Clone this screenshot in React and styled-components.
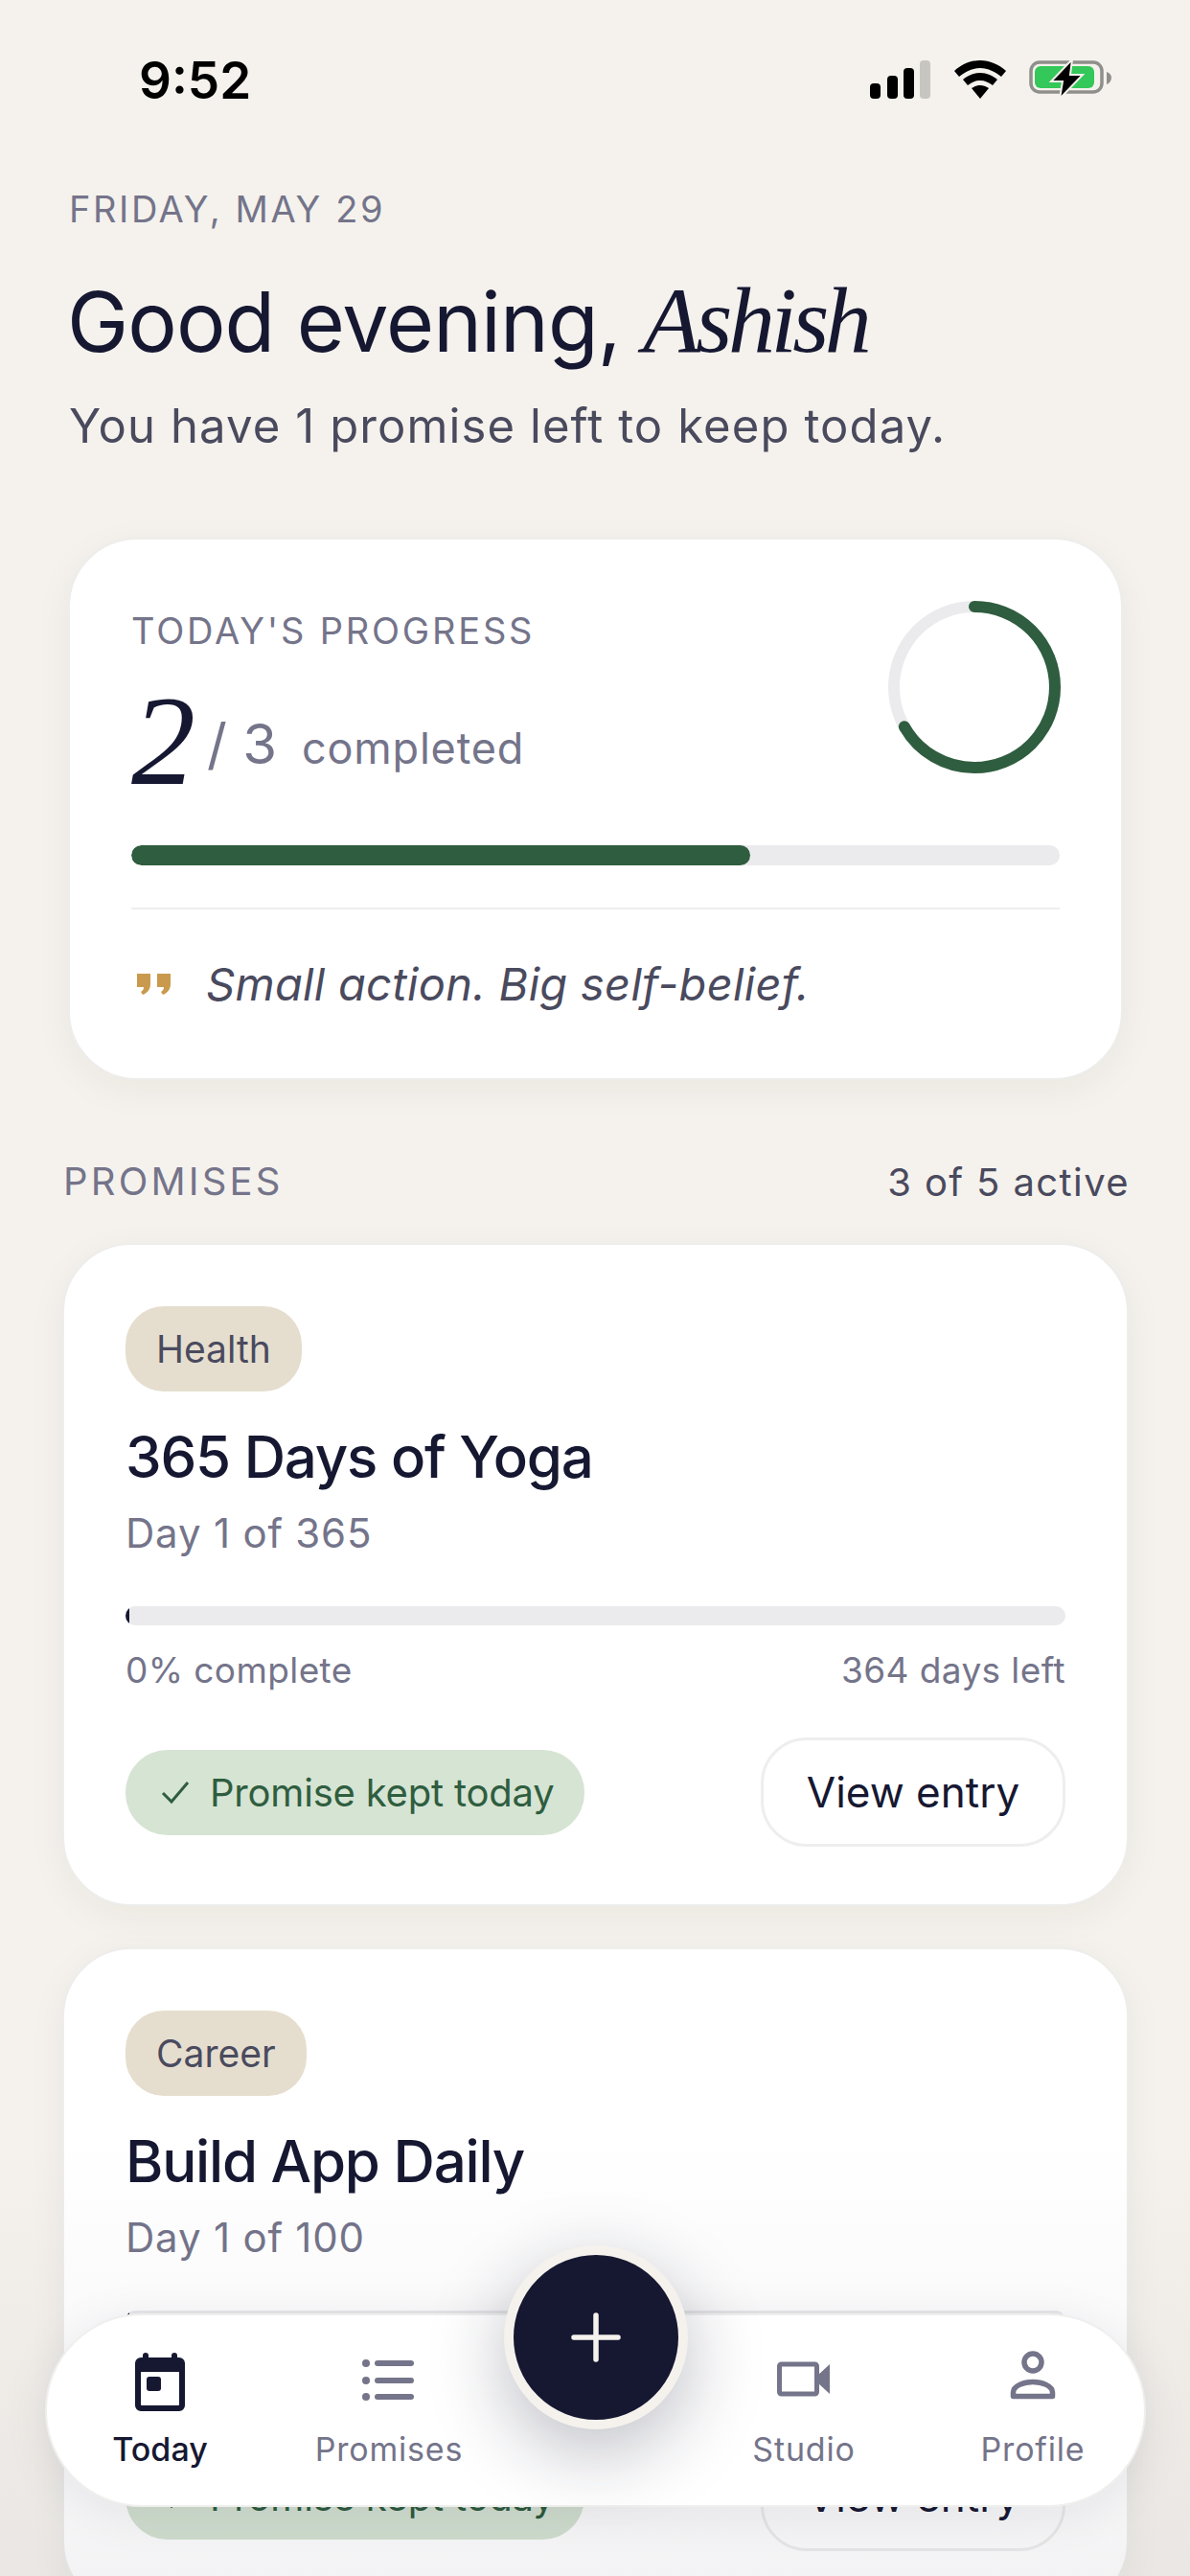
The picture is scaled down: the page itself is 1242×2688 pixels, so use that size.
import * as React from 'react';
import styled, { createGlobalStyle } from 'styled-components';

const ink = '#161832';
const slate = '#4a4a5e';
const muted = '#74748a';
const green = '#2f5d3f';
const cream = '#f5f2ed';
const track = '#ebebed';

const GlobalStyle = createGlobalStyle`
  html, body {
    margin: 0;
    padding: 0;
    background: ${cream};
  }
  * {
    box-sizing: border-box;
  }
`;

const Screen = styled.div`
  position: relative;
  width: 1242px;
  height: 2688px;
  overflow: hidden;
  background: ${cream};
  font-family: Inter, "Liberation Sans", sans-serif;
  color: ${ink};
`;

const StatusBar = styled.div`
  display: flex;
  justify-content: space-between;
  align-items: flex-start;
  height: 195px;
  padding: 54px 80px 0 145px;
`;

const Clock = styled.div`
  font-size: 53px;
  line-height: 60px;
  font-weight: 600;
  color: #000;
`;

const Header = styled.header`
  padding: 0 72px;
`;

const DateLine = styled.div`
  font-size: 38px;
  line-height: 46px;
  letter-spacing: 2.6px;
  color: ${muted};
`;

const Greeting = styled.h1`
  margin: 38px 0 0 -2px;
  font-size: 86px;
  line-height: 110px;
  font-weight: 400;
  letter-spacing: -0.9px;
  color: ${ink};
`;

const Name = styled.em`
  font-family: "Liberation Serif", serif;
  font-style: italic;
  font-size: 98px;
  letter-spacing: -4.5px;
`;

const Sub = styled.p`
  margin: 23px 0 0;
  font-size: 49px;
  line-height: 62px;
  letter-spacing: 1.1px;
  color: ${slate};
`;

const Card = styled.section`
  background: #fff;
  border: 2px solid #ededeb;
  border-radius: 72px;
  box-shadow: 0 10px 40px rgba(40, 36, 20, 0.05);
`;

const ProgressCard = styled(Card)`
  margin: 85px 70px 0 71px;
  height: 566px;
  padding: 56px 64px 0;
`;

const ProgressTop = styled.div`
  display: flex;
  justify-content: space-between;
  height: 201px;
  margin-bottom: 62px;
`;

const Caption = styled.div`
  font-size: 38px;
  line-height: 46px;
  letter-spacing: 2.8px;
  color: ${muted};
`;

const SectionLabel = styled(Caption)`
  font-size: 40px;
  letter-spacing: 3.2px;
`;

const ProgressLabel = styled(Caption)`
  margin-top: 16px;
`;

const Score = styled.div`
  display: flex;
  align-items: flex-end;
  height: 130px;
  margin-top: 27px;
`;

const ScoreDone = styled.span`
  font-family: "Liberation Serif", serif;
  font-style: italic;
  font-size: 134px;
  line-height: 130px;
  color: ${ink};
`;

const ScoreRest = styled.div`
  display: flex;
  align-items: baseline;
  padding-bottom: 27px;
`;

const ScoreTotal = styled.span`
  margin-left: 12px;
  font-size: 58px;
  color: ${muted};
`;

const ScoreWord = styled.span`
  margin-left: 26px;
  font-size: 45px;
  letter-spacing: 0.8px;
  color: ${muted};
`;

const Ring = styled.svg`
  display: block;
  width: 180px;
  height: 180px;
  margin: 8px -1px 0 0;
`;

const Bar = styled.div`
  height: ${(p) => p.$height}px;
  border-radius: 12px;
  background: ${track};
  overflow: hidden;
`;

const BarFill = styled.div`
  height: 100%;
  border-radius: 12px;
  background: ${(p) => p.$color};
`;

const Divider = styled.div`
  height: 2px;
  margin-top: 44px;
  background: #eeeeee;
`;

const Quote = styled.div`
  display: flex;
  align-items: center;
  gap: 36px;
  height: 155px;
  padding-left: 6px;
  font-size: 47px;
  font-style: italic;
  letter-spacing: 0.3px;
  color: ${slate};
`;

const SectionHead = styled.div`
  display: flex;
  justify-content: space-between;
  align-items: center;
  height: 46px;
  margin: 83px 63px 0 66px;
`;

const SectionCount = styled.span`
  font-size: 40px;
  letter-spacing: 1.4px;
  color: ${slate};
`;

const PromiseList = styled.div`
  display: flex;
  flex-direction: column;
  gap: 43px;
  margin: 41px 64px 0 65px;
`;

const PromiseCard = styled(Card)`
  height: 692px;
  padding: 64px 64px 0;
`;

const Tag = styled.span`
  display: inline-flex;
  align-items: center;
  height: 89px;
  padding: 0 32px;
  border-radius: 40px;
  background: #e5decf;
  font-size: 39px;
  color: ${slate};
`;

const PromiseTitle = styled.h2`
  margin: 32px 0 0;
  font-size: 60px;
  line-height: 72px;
  font-weight: 500;
  letter-spacing: -1.2px;
  color: ${ink};
`;

const DayCount = styled.div`
  margin-top: 19px;
  font-size: 42px;
  line-height: 50px;
  letter-spacing: 0.8px;
  color: ${muted};
`;

const PromiseBar = styled(Bar)`
  margin-top: 51px;
`;

const BarNotes = styled.div`
  display: flex;
  justify-content: space-between;
  margin-top: 24px;
  font-size: 37px;
  line-height: 46px;
  letter-spacing: 0.4px;
  color: ${muted};
`;

const ActionRow = styled.div`
  display: flex;
  justify-content: space-between;
  align-items: center;
  margin-top: 47px;
`;

const KeptPill = styled.div`
  display: flex;
  align-items: center;
  gap: 20px;
  width: 479px;
  height: 89px;
  padding: 0 0 0 36px;
  border-radius: 44px;
  background: #d6e4d3;
  font-size: 40px;
  letter-spacing: -0.2px;
  color: ${green};
`;

const EntryButton = styled.button`
  width: 318px;
  height: 114px;
  padding: 0;
  border: 3px solid #eeeeee;
  border-radius: 48px;
  background: #fff;
  font-family: inherit;
  font-size: 44px;
  color: ${ink};
`;

const Scrim = styled.div`
  position: absolute;
  left: 0;
  right: 0;
  bottom: 0;
  height: 460px;
  background: linear-gradient(rgba(22, 24, 50, 0), rgba(22, 24, 50, 0.05));
`;

const TabBar = styled.nav`
  position: absolute;
  left: 47px;
  top: 2414px;
  width: 1149px;
  height: 202px;
  display: grid;
  grid-template-columns: 200px 200px 1fr 200px 200px;
  column-gap: 39px;
  padding: 0 16px 0 18px;
  border: 2px solid #efefed;
  border-radius: 101px;
  background: #fff;
  box-shadow: 0 8px 50px rgba(22, 24, 50, 0.08);
`;

const Tab = styled.div`
  display: flex;
  flex-direction: column;
  align-items: center;
  padding-top: 36px;
  color: ${(p) => (p.$active ? ink : muted)};
`;

const TabIcon = styled.svg`
  display: block;
  width: 64px;
  height: 64px;
`;

const TabLabel = styled.span`
  margin-top: 19px;
  font-size: 34px;
  line-height: 42px;
  font-weight: ${(p) => (p.$active ? 500 : 400)};
  letter-spacing: ${(p) => (p.$active ? 0 : 0.8)}px;
`;

const Fab = styled.button`
  position: absolute;
  left: 526px;
  top: 2343px;
  width: 192px;
  height: 192px;
  display: flex;
  align-items: center;
  justify-content: center;
  padding: 0;
  border: 10px solid ${cream};
  border-radius: 50%;
  background: ${ink};
  box-shadow: 0 24px 80px rgba(22, 24, 50, 0.28);
`;

const SignalIcon = () => (
  <svg width="64" height="40" viewBox="0 0 64 40">
    <rect x="0" y="24" width="11" height="16" rx="4" fill="#000" />
    <rect x="18" y="16" width="11" height="24" rx="4" fill="#000" />
    <rect x="35" y="8" width="11" height="32" rx="4" fill="#000" />
    <rect x="52" y="0" width="11" height="40" rx="4" fill="#c6c5c0" />
  </svg>
);

const WifiIcon = () => (
  <svg width="54" height="40" viewBox="0 0 54 40">
    <path d="M27 0C17 0 8 4 0 11l5 6c6-5 14-9 22-9s16 4 22 9l5-6C46 4 37 0 27 0z" fill="#000" />
    <path d="M27 13c-7 0-13 3-18 7l5 6c4-3 8-5 13-5s9 2 13 5l5-6c-5-4-11-7-18-7z" fill="#000" />
    <path d="M27 26c-3 0-6 1-9 3l9 11 9-11c-3-2-6-3-9-3z" fill="#000" />
  </svg>
);

const BatterySvg = styled.svg`
  margin-top: -2px;
`;

const BatteryIcon = () => (
  <BatterySvg width="88" height="44" viewBox="0 0 88 44">
    <rect x="2" y="4" width="74" height="31" rx="9" fill="none" stroke="#8f8f8c" strokeWidth="3.5" />
    <rect x="6" y="8" width="62" height="23" rx="6" fill="#34c759" />
    <path d="M81 14c3 1 5 3 5 6s-2 6-5 7z" fill="#8f8f8c" />
    <path d="M45 1L23 24h12l-3 18 24-25H43z" fill="#000" stroke={cream} strokeWidth="2" />
  </BatterySvg>
);

const StatusIcons = styled.div`
  display: flex;
  align-items: flex-start;
  gap: 24px;
  padding-top: 9px;
`;

const QuoteMark = () => (
  <svg width="36" height="22" viewBox="0 0 36 22">
    <path d="M0 0h14v11c0 5-3 9-8 11l-2-3c2-1 3-3 3-5H0zM21 0h14v11c0 5-3 9-8 11l-2-3c2-1 3-3 3-5h-7z" fill="#c99a4e" />
  </svg>
);

const CheckIcon = () => (
  <svg width="32" height="30" viewBox="0 0 32 30">
    <path d="M3 16l9 9L29 5" fill="none" stroke={green} strokeWidth="3" />
  </svg>
);

const CalendarIcon = () => (
  <TabIcon viewBox="0 0 64 64">
    <path
      d="M17 3a3 3 0 0 1 3 3v2h24V6a3 3 0 0 1 6 0v2h2a6 6 0 0 1 6 6v44a6 6 0 0 1-6 6H12a6 6 0 0 1-6-6V14a6 6 0 0 1 6-6h2V6a3 3 0 0 1 3-3zM12 23v34a1 1 0 0 0 1 1h38a1 1 0 0 0 1-1V23z"
      fill="currentColor"
      fillRule="evenodd"
    />
    <rect x="18" y="28" width="15" height="15" rx="3" fill="currentColor" />
  </TabIcon>
);

const ListIcon = () => (
  <TabIcon viewBox="0 0 64 64">
    <circle cx="8" cy="14" r="4" fill="currentColor" />
    <circle cx="8" cy="32" r="4" fill="currentColor" />
    <circle cx="8" cy="49" r="4" fill="currentColor" />
    <rect x="17" y="11" width="41" height="6" rx="3" fill="currentColor" />
    <rect x="17" y="29" width="41" height="6" rx="3" fill="currentColor" />
    <rect x="17" y="46" width="41" height="6" rx="3" fill="currentColor" />
  </TabIcon>
);

const VideoIcon = () => (
  <TabIcon viewBox="0 0 64 64">
    <rect x="6.5" y="15" width="39" height="31" rx="2" fill="none" stroke="currentColor" strokeWidth="5" />
    <path d="M46 27l13-12v31L46 34z" fill="currentColor" />
  </TabIcon>
);

const PersonIcon = () => (
  <TabIcon viewBox="0 0 64 64">
    <circle cx="32" cy="13" r="9" fill="none" stroke="currentColor" strokeWidth="5.5" />
    <path
      d="M11.5 48.5v-4c0-7 11-11 20.500-11s20.500 4 20.500 11v4z"
      fill="none"
      stroke="currentColor"
      strokeWidth="5.5"
      strokeLinejoin="round"
    />
  </TabIcon>
);

const promises = [
  { tag: 'Health', title: '365 Days of Yoga', days: 'Day 1 of 365', left: '364 days left' },
  { tag: 'Career', title: 'Build App Daily', days: 'Day 1 of 100', left: '99 days left' },
];

const tabs = [
  { label: 'Today', Icon: CalendarIcon, active: true },
  { label: 'Promises', Icon: ListIcon },
  null,
  { label: 'Studio', Icon: VideoIcon },
  { label: 'Profile', Icon: PersonIcon },
];

const ringLength = 2 * Math.PI * 84;

export default function App() {
  return (
    <Screen>
      <GlobalStyle />
      <StatusBar>
        <Clock>9:52</Clock>
        <StatusIcons>
          <SignalIcon />
          <WifiIcon />
          <BatteryIcon />
        </StatusIcons>
      </StatusBar>

      <Header>
        <DateLine>FRIDAY, MAY 29</DateLine>
        <Greeting>
          Good evening, <Name>Ashish</Name>
        </Greeting>
        <Sub>You have 1 promise left to keep today.</Sub>
      </Header>

      <ProgressCard>
        <ProgressTop>
          <div>
            <ProgressLabel>TODAY'S PROGRESS</ProgressLabel>
            <Score>
              <ScoreDone>2</ScoreDone>
              <ScoreRest>
                <ScoreTotal>/ 3</ScoreTotal>
                <ScoreWord>completed</ScoreWord>
              </ScoreRest>
            </Score>
          </div>
          <Ring viewBox="0 0 180 180">
            <circle cx="90" cy="90" r="84" fill="none" stroke={track} strokeWidth="12" />
            <circle
              cx="90"
              cy="90"
              r="84"
              fill="none"
              stroke={green}
              strokeWidth="12"
              strokeLinecap="round"
              strokeDasharray={`${ringLength * 0.667} ${ringLength}`}
              transform="rotate(-90 90 90)"
            />
          </Ring>
        </ProgressTop>
        <Bar $height={21}>
          <BarFill $color={green} style={{ width: '66.7%' }} />
        </Bar>
        <Divider />
        <Quote>
          <QuoteMark />
          Small action. Big self-belief.
        </Quote>
      </ProgressCard>

      <SectionHead>
        <SectionLabel>PROMISES</SectionLabel>
        <SectionCount>3 of 5 active</SectionCount>
      </SectionHead>

      <PromiseList>
        {promises.map((item) => (
          <PromiseCard key={item.title}>
            <Tag>{item.tag}</Tag>
            <PromiseTitle>{item.title}</PromiseTitle>
            <DayCount>{item.days}</DayCount>
            <PromiseBar $height={20}>
              <BarFill $color={ink} style={{ width: '4px' }} />
            </PromiseBar>
            <BarNotes>
              <span>0% complete</span>
              <span>{item.left}</span>
            </BarNotes>
            <ActionRow>
              <KeptPill>
                <CheckIcon />
                Promise kept today
              </KeptPill>
              <EntryButton>View entry</EntryButton>
            </ActionRow>
          </PromiseCard>
        ))}
      </PromiseList>

      <Scrim />

      <TabBar>
        {tabs.map((tab, i) =>
          tab ? (
            <Tab key={tab.label} $active={tab.active}>
              <tab.Icon />
              <TabLabel $active={tab.active}>{tab.label}</TabLabel>
            </Tab>
          ) : (
            <div key={i} />
          )
        )}
      </TabBar>

      <Fab aria-label="Add promise">
        <svg width="52" height="52" viewBox="0 0 52 52">
          <path d="M26 3v46M3 26h46" stroke={cream} strokeWidth="5.500" strokeLinecap="round" />
        </svg>
      </Fab>
    </Screen>
  );
}
